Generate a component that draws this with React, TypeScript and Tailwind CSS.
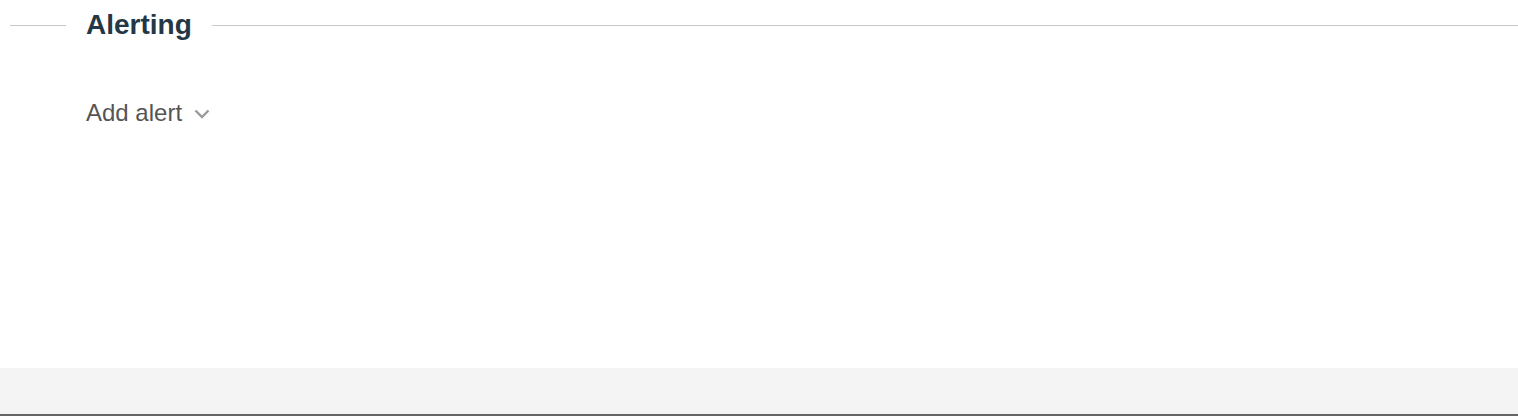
export default function App() {
  return (
    <div className="w-[1518px] h-[416px] flex flex-col bg-white font-['Liberation_Sans',Arial,sans-serif]">
      <div className="flex-1">
        <div className="flex items-center pl-[10px] pt-[7px]">
          <div className="w-[56px] h-px bg-[#c8c8c8]" />
          <h2 className="px-5 text-[28px] leading-[36px] font-bold text-[#243746]">Alerting</h2>
          <div className="flex-1 h-px bg-[#c8c8c8]" />
        </div>
        <div className="pl-[86px] mt-[55px]">
          <button className="flex items-center gap-3 text-[24px] leading-[30px] text-[#555555]">
            Add alert
            <svg width="16" height="10" viewBox="0 0 16 10" fill="none" className="mt-[2px]">
              <path d="M1.5 1.5 L8 8 L14.5 1.5" stroke="#9a9a9a" strokeWidth="2.4" />
            </svg>
          </button>
        </div>
      </div>
      <div className="h-[48px] bg-[#f4f4f4] border-b-2 border-[#666666]" />
    </div>
  );
}
